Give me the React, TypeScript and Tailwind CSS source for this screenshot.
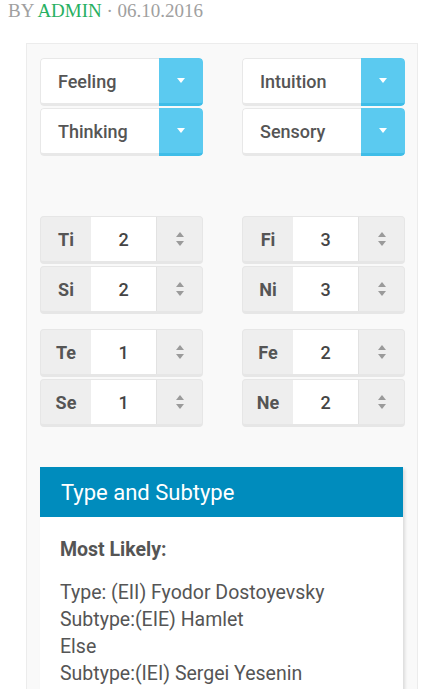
import React from 'react';

const selects = [
  ['Feeling', 'Intuition'],
  ['Thinking', 'Sensory'],
];

const groups = [
  [
    [{ label: 'Ti', value: 2 }, { label: 'Fi', value: 3 }],
    [{ label: 'Si', value: 2 }, { label: 'Ni', value: 3 }],
  ],
  [
    [{ label: 'Te', value: 1 }, { label: 'Fe', value: 2 }],
    [{ label: 'Se', value: 1 }, { label: 'Ne', value: 2 }],
  ],
];

function Caret() {
  return (
    <svg width="8" height="5" viewBox="0 0 8 5">
      <path d="M0 0 L8 0 L4 5 Z" fill="#ffffff" />
    </svg>
  );
}

function Spinner() {
  return (
    <svg width="10" height="16" viewBox="0 0 10 16">
      <path d="M1 6 L9 6 L5 1 Z" fill="#9a9a9a" />
      <path d="M1 10 L9 10 L5 15 Z" fill="#9a9a9a" />
    </svg>
  );
}

function Dropdown({ label }: { label: string }) {
  return (
    <div className="flex h-[48px] w-[163px] rounded-[4px] overflow-hidden">
      <div className="flex-1 flex items-center pl-[17px] pt-[1px] bg-white border border-[#e8e8e8] border-b-[3px] border-r-0 rounded-l-[4px] text-[18px] font-medium text-[#555]">
        {label}
      </div>
      <div className="w-[44px] flex items-center justify-center bg-[#5bcaf0] border-b-[3px] border-[#3fbde8] rounded-r-[4px]">
        <Caret />
      </div>
    </div>
  );
}

function SpinInput({ label, value }: { label: string; value: number }) {
  return (
    <div className="flex h-[48px] w-[163px] rounded-[4px] overflow-hidden border border-[#e6e6e6] border-b-[3px] bg-[#eeeeee]">
      <div className="w-[50px] flex items-center justify-center text-[18px] font-bold text-[#555]">
        {label}
      </div>
      <div className="w-[65px] flex items-center justify-center bg-white text-[18px] font-medium text-[#444]">
        {value}
      </div>
      <div className="flex-1 flex items-center justify-center border-l border-[#e2e2e2]">
        <Spinner />
      </div>
    </div>
  );
}

export default function App() {
  return (
    <div className="w-[423px] h-[689px] overflow-hidden bg-white" style={{ fontFamily: 'Roboto, "Noto Sans", sans-serif' }}>
      <div className="pl-[8px] h-[43px] text-[19px] leading-[22px] text-[#a0a0a0]" style={{ fontFamily: '"Liberation Serif", serif' }}>
        BY <span className="text-[#27b062]">ADMIN</span> · 06.10.2016
      </div>
      <div className="ml-[26px] w-[392px] border border-[#ececec] bg-[#f9f9f9] px-[13px] pt-[14px] pb-[20px]">
        <div className="flex flex-col gap-[2px]">
          {selects.map((row, i) => (
            <div key={i} className="flex justify-between w-[365px]">
              <Dropdown label={row[0]} />
              <Dropdown label={row[1]} />
            </div>
          ))}
        </div>

        {groups.map((g, gi) => (
          <div key={gi} className={gi === 0 ? 'mt-[60px] flex flex-col gap-[2px]' : 'mt-[15px] flex flex-col gap-[2px]'}>
            {g.map((row, ri) => (
              <div key={ri} className="flex justify-between w-[365px]">
                <SpinInput label={row[0].label} value={row[0].value} />
                <SpinInput label={row[1].label} value={row[1].value} />
              </div>
            ))}
          </div>
        ))}

        <div className="mt-[40px] w-[363px] bg-white shadow-[2px_2px_3px_rgba(0,0,0,0.12)]">
          <div className="h-[50px] bg-[#008cbd] flex items-center pl-[21px] text-[22px] text-white">
            Type and Subtype
          </div>
          <div className="px-[20px] pt-[20px] pb-[20px] text-[19.5px] text-[#555]">
            <div className="font-bold mb-[16px] leading-[26px]">Most Likely:</div>
            <div className="leading-[27px]">Type: (EII) Fyodor Dostoyevsky</div>
            <div className="leading-[27px]">Subtype:(EIE) Hamlet</div>
            <div className="leading-[27px]">Else</div>
            <div className="leading-[27px]">Subtype:(IEI) Sergei Yesenin</div>
          </div>
        </div>
      </div>
    </div>
  );
}
